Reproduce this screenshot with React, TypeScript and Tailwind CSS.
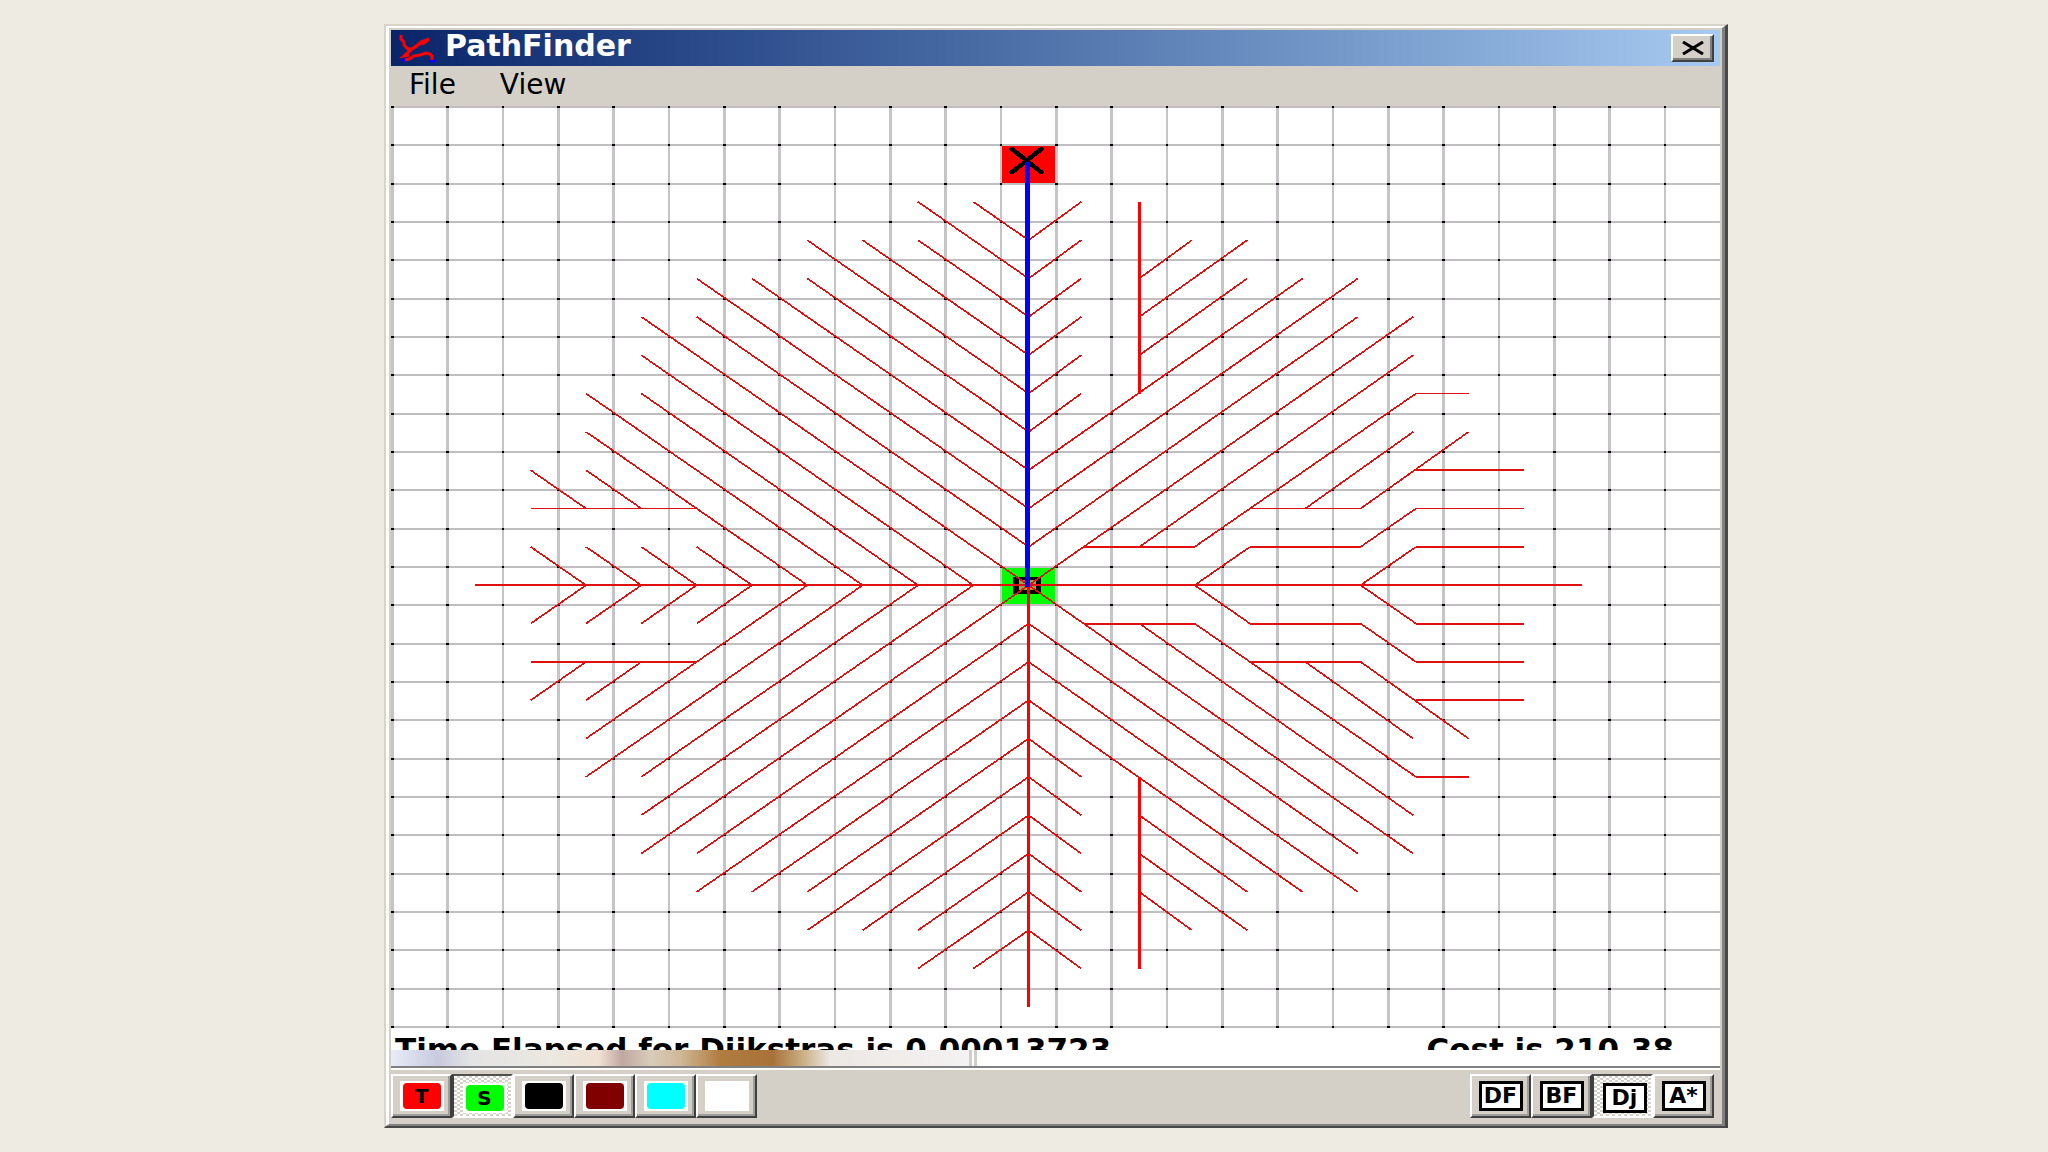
import { useState } from "react";
import clsx from "clsx";

const CELL = 20;
const GRID = 24;

type Point = [number, number];

const START: Point = [11, 12];
const TARGET: Point = [11, 1];

// upper half of the search tree in cell coordinates, reflected about the start row
const BRANCHES: Point[][] = [
  [[10, 2], [11, 3]],
  [[9, 2], [11, 4]],
  [[9, 3], [11, 5]],
  [[8, 3], [11, 6]],
  [[7, 3], [11, 7]],
  [[7, 4], [11, 8]],
  [[6, 4], [11, 9]],
  [[5, 4], [11, 10]],
  [[5, 5], [11, 11]],
  [[4, 5], [11, 12]],
  [[4, 6], [10, 12]],
  [[4, 7], [9, 12]],
  [[3, 7], [8, 12]],
  [[3, 8], [7, 12]],
  [[2, 9], [3, 10]],
  [[3, 9], [4, 10]],
  [[2, 10], [5, 10]],
  [[2, 11], [3, 12]],
  [[3, 11], [4, 12]],
  [[4, 11], [5, 12]],
  [[5, 11], [6, 12]],
  [[11, 3], [12, 2]],
  [[11, 4], [12, 3]],
  [[11, 5], [12, 4]],
  [[11, 6], [12, 5]],
  [[11, 7], [12, 6]],
  [[11, 8], [12, 7]],
  [[11, 9], [16, 4]],
  [[11, 10], [17, 4]],
  [[11, 11], [17, 5]],
  [[11, 12], [18, 5]],
  [[12, 11], [14, 11]],
  [[13, 11], [18, 6]],
  [[14, 11], [18, 7]],
  [[18, 7], [19, 7]],
  [[15, 10], [17, 10]],
  [[16, 10], [18, 8]],
  [[17, 10], [19, 8]],
  [[18, 9], [20, 9]],
  [[14, 12], [15, 11]],
  [[15, 11], [17, 11]],
  [[17, 11], [18, 10]],
  [[18, 10], [20, 10]],
  [[17, 12], [18, 11]],
  [[18, 11], [20, 11]],
  [[13, 2], [13, 7]],
  [[13, 4], [14, 3]],
  [[13, 5], [15, 3]],
  [[13, 6], [15, 4]],
];

const midX = (n: number) => n * CELL + 10.5;
const midY = (n: number) => n * CELL + 10;

const isLeaf = ([x, y]: Point) => x > START[0] && !BRANCHES.some(([a]) => a[0] === x && a[1] === y);

function Segment({ from, to, trim = false }: { from: Point; to: Point; trim?: boolean }) {
  const vertical = from[0] === to[0];
  const straight = vertical || from[1] === to[1];
  return (
    <line
      x1={midX(from[0])}
      y1={midY(from[1])}
      x2={midX(to[0]) - (trim && !vertical ? 1 : 0)}
      y2={midY(to[1])}
      stroke={vertical ? "#ff0000" : "#e01010"}
      strokeWidth={straight ? 1 : 0.75}
    />
  );
}

function SearchGrid() {
  const size = GRID * CELL + 1;
  const lines = Array.from({ length: GRID + 1 }, (_, i) => i);
  const columns = lines.slice(0, GRID);
  return (
    <svg
      viewBox={`0 0 ${size - 0.6} ${size}`}
      preserveAspectRatio="none"
      shapeRendering="crispEdges"
      className="block aspect-[1329/922] w-full bg-white"
      role="img"
      aria-label="Search grid"
    >
      {columns.map((c) => (
        <rect key={c} x={c * CELL} y={0} width={1} height={size} fill="#c6c4c6" />
      ))}
      {lines.map((r) => (
        <rect key={r} x={0} y={r * CELL} width={size} height={1} fill="#c0bec0" />
      ))}
      {columns.map((c) =>
        lines.map((r) => <rect key={`${c}-${r}`} x={c * CELL} y={r * CELL} width={1} height={1} />)
      )}

      <rect x={TARGET[0] * CELL + 1} y={TARGET[1] * CELL + 1} width={19} height={19} fill="#ff0000" />
      <rect x={START[0] * CELL + 1} y={START[1] * CELL + 1} width={19} height={19} fill="#00ff00" />
      <rect x={226} y={246.5} width={8} height={7} fill="#a0a040" stroke="#000" strokeWidth={2} />
      <path d="M224.5 22.5 235 34.5M235 22.5 224.5 34.5" stroke="#000" strokeWidth={2} strokeLinecap="round" />

      {BRANCHES.map(([a, b], i) => (
        <g key={i}>
          <Segment from={a} to={b} trim={isLeaf(b)} />
          <Segment from={[a[0], GRID - a[1]]} to={[b[0], GRID - b[1]]} trim={isLeaf(b)} />
        </g>
      ))}
      <Segment from={[1, 12]} to={[21, 12]} />
      <Segment from={[11, 12]} to={[11, 23]} />
      <rect x={229} y={29} width={2} height={222} fill="#0000ff" />
    </svg>
  );
}

function ToolButton({
  label,
  pressed,
  onClick,
  children,
}: {
  label: string;
  pressed: boolean;
  onClick: () => void;
  children: React.ReactNode;
}) {
  return (
    <button
      type="button"
      aria-label={label}
      aria-pressed={pressed}
      onClick={onClick}
      className={clsx(
        "flex h-11 w-[61px] items-center justify-center border-2",
        pressed
          ? "border-t-[#505050] border-r-white border-b-white border-l-[#404040] bg-[repeating-conic-gradient(#d4d0c8_0_25%,#ffffff_0_50%)] bg-[length:6px_4px] pt-1 pl-1"
          : "border-t-white border-r-[#404040] border-b-[#404040] border-l-white bg-[#d4d0c8] shadow-[inset_-2px_-2px_0_#a09e9a]"
      )}
    >
      {children}
    </button>
  );
}

const BRUSHES = [
  { name: "Target", text: "T", fill: "bg-[#ff0000]" },
  { name: "Start", text: "S", fill: "bg-[#00ff00]" },
  { name: "Wall", text: "", fill: "bg-black" },
  { name: "Mud", text: "", fill: "bg-[#800000]" },
  { name: "Water", text: "", fill: "bg-[#00ffff]" },
  { name: "Open", text: "", fill: "bg-white" },
];

const ALGORITHMS = [
  { name: "Depth first", text: "DF" },
  { name: "Breadth first", text: "BF" },
  { name: "Dijkstra", text: "Dj" },
  { name: "A star", text: "A*" },
];

export default function App() {
  const [brush, setBrush] = useState("Start");
  const [algorithm, setAlgorithm] = useState("Dijkstra");

  return (
    <div className="flow-root min-h-screen bg-[#eeebe2] font-['DejaVu_Sans',sans-serif] text-black">
      <main className="mt-6 ml-[18.75%] w-[65.625%] border-t-2 border-r-3 border-b-2 border-l-2 border-t-[#d8d4c8] border-r-[#484848] border-b-[#484848] border-l-[#d8d4c8]">
        <div className="border-t-2 border-r-3 border-b-2 border-l-3 border-t-white border-r-[#808080] border-b-[#808080] border-l-white bg-[#d4d0c8] px-[2px] pt-[2px]">
          <header className="flex h-9 items-center bg-linear-to-r from-[#0a246a] to-[#a6caf0] pr-[6px] pl-2">
            <svg viewBox="0 0 36 30" className="h-[30px] w-9 shrink-0" fill="none" aria-hidden="true">
              <path d="M3 27h6M30 28h6" stroke="#00f" strokeWidth="3" />
              <path d="M2 2v4l3 3v3l4 4h4l5-3 4-4 8-3-5 4-5 1-7 5-8 7 5-1" stroke="#f00" strokeWidth="3" />
              <path d="M6 27l4-1 5-3 6-1 6-2 4 1 2 2v4" stroke="#f00" strokeWidth="3" />
            </svg>
            <h1 className="ml-[10px] grow pb-1 text-[30px] leading-8 font-bold text-white">PathFinder</h1>
            <button
              type="button"
              aria-label="Close"
              className="flex h-7 w-[43px] items-center justify-center border-2 border-t-white border-r-[#404040] border-b-[#404040] border-l-white bg-[#d4d0c8] shadow-[inset_-2px_-2px_0_#808080]"
            >
              <svg viewBox="0 0 22 14" className="h-[14px] w-[22px]" aria-hidden="true">
                <path d="M1 1 21 13M21 1 1 13" stroke="#000" strokeWidth="3" />
              </svg>
            </button>
          </header>

          <nav className="flex h-10 items-center gap-11 px-[18px] text-[28px] leading-8">
            <button type="button" className="pb-[2px]">File</button>
            <button type="button" className="pb-[2px]">View</button>
          </nav>

          <SearchGrid />

          <div className="bg-white">
            <div className="flex h-[22px] justify-between overflow-hidden pt-[5px] pr-[46px] pl-1 text-[31px] leading-8 font-bold whitespace-nowrap">
              <p>Time Elapsed for Dijkstras is 0.00013723</p>
              <p>Cost is 210.38</p>
            </div>
            <div className="flex h-4">
              <div className="w-[43.5%] bg-[linear-gradient(90deg,#e8ecf8_0%,#c8cade_8%,#e4e4e4_14%,#ebe8e0_28%,#f0e0d4_36%,#c0a8a0_40%,#d8ccba_45%,#d0b898_50%,#b07c40_57%,#a87238_66%,#c8ac80_71%,#ece8e4_76%,#f4f2f2_100%)]" />
              <div className="w-2 border-x-3 border-[#d0cec8]" />
            </div>
          </div>

          <footer className="flex justify-between border-t-2 border-[#808080]">
            <div className="flex grow justify-between border-t-2 border-white pt-1 pr-[6px] pb-[6px]">
              <div className="flex">
                {BRUSHES.map((b) => (
                  <ToolButton key={b.name} label={b.name} pressed={brush === b.name} onClick={() => setBrush(b.name)}>
                    <span className="bg-white px-[3px] py-[2px]">
                      <span
                        className={clsx(
                          "flex h-[26px] w-[38px] items-center justify-center rounded-sm text-[20px] leading-5 font-bold",
                          b.fill
                        )}
                      >
                        {b.text}
                      </span>
                    </span>
                  </ToolButton>
                ))}
              </div>
              <div className="flex">
                {ALGORITHMS.map((a) => (
                  <ToolButton
                    key={a.name}
                    label={a.name}
                    pressed={algorithm === a.name}
                    onClick={() => setAlgorithm(a.name)}
                  >
                    <span className="flex h-[30px] w-11 items-center justify-center border-3 border-black bg-white text-[22px] leading-5 font-bold">
                      {a.text}
                    </span>
                  </ToolButton>
                ))}
              </div>
            </div>
          </footer>
        </div>
      </main>
    </div>
  );
}
